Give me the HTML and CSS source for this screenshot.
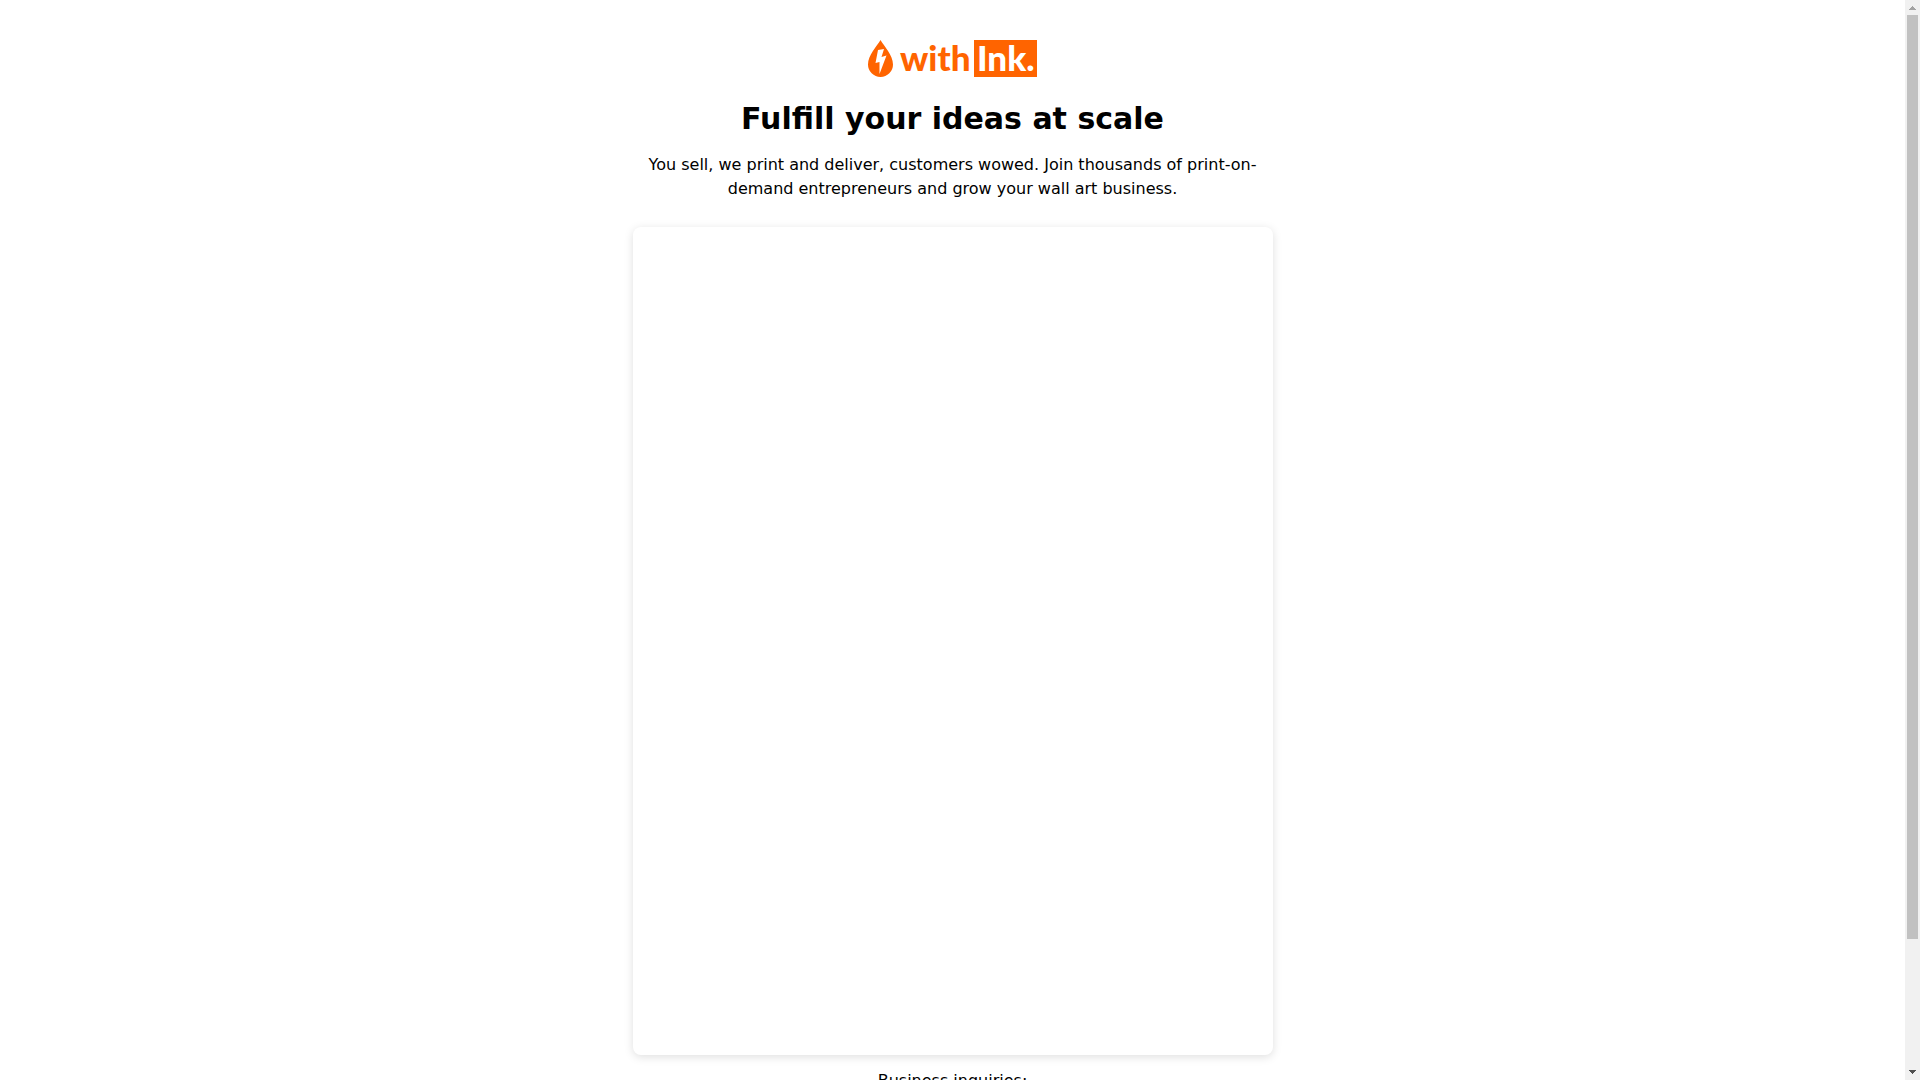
FILE: index.html
```html
<!DOCTYPE html>
<html lang="en">

<head>
    <meta charset="utf-8">
    <meta name="viewport" content="width=device-width, initial-scale=1">
    <title>withInk</title>
    <link rel="stylesheet" href="styles.css">
</head>

<body>

    <main class="container">
        <svg class="logo" viewBox="0 0 169 37" role="img" aria-label="withInk">
            <path class="logo-fill" d="M12.500 0C9 6 0 15 0 24.500A12.500 12.500 0 0 0 25 24.500C25 15 16 6 12.500 0Z" />
            <path class="logo-bolt" d="M10 10L16 9L13.500 17L18.500 15.500L11.500 34L11.500 22L7.500 23Z" />
            <text class="logo-text" x="32" y="31">with</text>
            <rect class="logo-fill" x="106" y="0" width="63" height="37" />
            <text class="logo-text logo-text-light" x="109" y="31">Ink.</text>
        </svg>

        <h1>Fulfill your ideas at scale</h1>
        <p class="intro">You sell, we print and deliver, customers wowed. Join thousands of print-on-demand entrepreneurs and grow your wall art business.</p>

        <div class="card"></div>

        <p class="contact">Business inquiries:</p>
    </main>

    <div class="scrollbar" aria-hidden="true">
        <svg class="arrow arrow-up" viewBox="0 0 15 15"><path d="M7 6h1v1h1v1h1v1h1v1H4V9h1V8h1V7h1z" /></svg>
        <div class="track">
            <div class="thumb"></div>
        </div>
        <svg class="arrow" viewBox="0 0 15 15"><path d="M4 5h7v1h-1v1H9v1H8v1H7V8H6V7H5V6H4z" /></svg>
    </div>

</body>

</html>
```

FILE: styles.css
```css
html {
    scrollbar-width: none;
}

body {
    margin: 0;
    padding-right: 15px; /* room for the scrollbar */
    font-family: "DejaVu Sans", sans-serif;
    font-size: 16px;
    line-height: 24px;
    color: #000;
    background-color: #fff;
}

.container {
    box-sizing: border-box;
    max-width: 640px;
    margin: 0 auto;
    padding: 40px 0 136px;
    text-align: center;
}

.logo {
    display: block;
    width: 169px;
    height: 37px;
    margin: 0 auto 24px;
    overflow: visible;
}

.logo-fill {
    fill: #ff6400;
}

.logo-bolt {
    fill: #fff;
}

.logo-text {
    font-family: Lato, sans-serif;
    font-size: 35px;
    font-weight: 900;
    fill: #ff6400;
}

.logo-text-light {
    fill: #fff;
}

h1 {
    margin: 0 0 16px;
    font-size: 30px;
    line-height: 36px;
    font-weight: 700;
}

.intro {
    margin: 0 0 26px;
}

.card {
    min-height: 828px;
    border-radius: 8px;
    background-color: #fff;
    box-shadow: 0 2px 10px rgba(0, 0, 0, 0.13);
}

.contact {
    margin: 14px 0 0;
}

.scrollbar {
    position: fixed;
    top: 0;
    right: 0;
    bottom: 0;
    display: flex;
    flex-direction: column;
    width: 15px;
    background-color: #f1f1f1;
}

.arrow {
    flex: none;
    width: 15px;
    height: 15px;
    fill: #505050;
}

.arrow-up {
    fill: #a3a3a3;
}

.track {
    flex: 1;
    padding: 0 2px;
}

.thumb {
    height: 88%;
    background-color: #c1c1c1;
}
```
